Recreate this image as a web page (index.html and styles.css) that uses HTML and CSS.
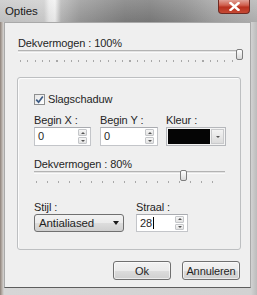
FILE: index.html
```html
<!DOCTYPE html>
<html lang="nl">
<head>
    <meta charset="UTF-8">
    <title>Opties</title>
    <link rel="stylesheet" href="styles.css">
</head>
<body>
    <div class="window">
        <div class="titlebar">
            <span class="title">Opties</span>
            <div class="close">
                <svg width="11" height="9" viewBox="0 0 11 9">
                    <path d="M1.5 1 L9.5 8 M9.5 1 L1.5 8" stroke="#fff" stroke-width="2.4" stroke-linecap="square"/>
                </svg>
            </div>
        </div>

        <div class="client">
            <div class="label top-label">Dekvermogen : 100%</div>
            <div class="slider wide">
                <div class="track"></div>
                <div class="ticks"></div>
                <div class="thumb" style="left: 218px;"></div>
            </div>

            <div class="group">
                <div class="check-row">
                    <span class="checkbox">
                        <svg width="9" height="9" viewBox="0 0 9 9">
                            <path d="M1.2 4.6 L3.6 7.2 L7.8 1.4" fill="none" stroke="#3d5b84" stroke-width="1.7"/>
                        </svg>
                    </span>
                    <span class="label">Slagschaduw</span>
                </div>

                <div class="field-row">
                    <div class="field col-x">
                        <div class="label">Begin X :</div>
                        <div class="spin-input">
                            <span class="value">0</span>
                            <span class="spin"><i class="up"></i><i class="down"></i></span>
                        </div>
                    </div>
                    <div class="field col-y">
                        <div class="label">Begin Y :</div>
                        <div class="spin-input">
                            <span class="value">0</span>
                            <span class="spin"><i class="up"></i><i class="down"></i></span>
                        </div>
                    </div>
                    <div class="field col-color">
                        <div class="label">Kleur :</div>
                        <div class="color-pick">
                            <span class="swatch"></span>
                            <span class="drop"><i class="down"></i></span>
                        </div>
                    </div>
                </div>

                <div class="label mid-label">Dekvermogen : 80%</div>
                <div class="slider narrow">
                    <div class="track"></div>
                    <div class="ticks"></div>
                    <div class="thumb" style="left: 146px;"></div>
                </div>

                <div class="field-row bottom-row">
                    <div class="field col-style">
                        <div class="label">Stijl :</div>
                        <div class="combo">
                            <span>Antialiased</span>
                            <span class="combo-arrow"></span>
                        </div>
                    </div>
                    <div class="field col-radius">
                        <div class="label">Straal :</div>
                        <div class="spin-input">
                            <span class="value">28<span class="caret"></span></span>
                            <span class="spin"><i class="up"></i><i class="down"></i></span>
                        </div>
                    </div>
                </div>
            </div>

            <div class="buttons">
                <button class="btn">Ok</button>
                <button class="btn">Annuleren</button>
            </div>
        </div>
    </div>
</body>
</html>
```

FILE: styles.css
```css
body {
    margin: 0;
    padding: 0;
    font-family: "Liberation Sans", Arial, sans-serif;
    font-size: 11px;
    letter-spacing: -0.1px;
    color: #1f1f1f;
    background: #8f8a86;
}
.window {
    width: 257px;
    height: 295px;
    overflow: hidden;
    background: linear-gradient(to right, #8c8078 0, #b9b1aa 2px, #d6d6d6 4px, #d2d2d2 251px, #bcbcbc 257px);
}
.titlebar {
    display: flex;
    align-items: flex-start;
    height: 22px;
    background:
        linear-gradient(to bottom, rgba(255,255,255,0.15), rgba(0,0,0,0.05)),
        linear-gradient(to right, #c9c9c9 0, #cfcfcf 44px, #ececec 49px, #f2f2f2 55px, #b8b8b8 61px,
            #9b9b9b 80px, #808080 125px, #7d7d7d 150px, #8e8e8e 185px, #a5a5a5 215px, #b6b6b6 257px);
}
.title {
    padding: 5px 0 0 5px;
    font-size: 11.5px;
    line-height: 13px;
    color: #1a1a1a;
}
.close {
    margin-left: auto;
    margin-right: 7px;
    width: 32px;
    height: 14px;
    box-sizing: border-box;
    border: 1px solid #6f2a22;
    border-top: none;
    border-radius: 0 0 4px 4px;
    background: linear-gradient(to bottom, #e0a096 0, #d0604f 40%, #b8311f 55%, #c64a35 100%);
    display: flex;
    align-items: center;
    justify-content: center;
}
.client {
    margin-left: 4px;
    width: 247px;
    height: 266px;
    box-sizing: border-box;
    border: 1px solid #a9a9a9;
    border-bottom-color: #5d5d5d;
    background: #efefef;
}
.label {
    line-height: 13px;
    white-space: nowrap;
}
.top-label {
    margin: 12px 0 0 13px;
    line-height: 14px;
    padding-top: 1px;
    height: 13px;
}

/* sliders */
.slider {
    position: relative;
    height: 15px;
}
.slider.wide {
    margin-left: 13px;
    width: 222px;
}
.slider.narrow {
    width: 191px;
}
.track {
    position: absolute;
    left: 0;
    right: 0;
    top: 1px;
    height: 1px;
    border-top: 1px solid #b3b3b3;
    border-bottom: 1px solid #fafafa;
    background: #e3e3e3;
}
.ticks {
    position: absolute;
    left: 2px;
    right: 2px;
    top: 11px;
    height: 2px;
    background: repeating-linear-gradient(to right, #a8a8a8 0, #a8a8a8 1px, transparent 1px, transparent 7.3px);
}
.narrow .ticks {
    background: repeating-linear-gradient(to right, #a8a8a8 0, #a8a8a8 1px, transparent 1px, transparent 11px);
}
.thumb {
    position: absolute;
    top: 0;
    width: 5px;
    height: 9px;
    border: 1px solid #7d7d7d;
    border-radius: 2px;
    background: linear-gradient(to bottom, #ffffff, #d8d8d8);
}

/* group box */
.group {
    margin: 13px 0 0 12px;
    width: 224px;
    box-sizing: border-box;
    padding: 15px 0 17px 16px;
    border: 1px solid #bdbfc1;
    border-radius: 3px;
    box-shadow: inset 1px 1px 0 #fcfcfc;
}
.check-row {
    display: flex;
    align-items: center;
    gap: 3px;
    height: 12px;
}
.checkbox {
    width: 11px;
    height: 11px;
    box-sizing: border-box;
    border: 1px solid #8e8f8f;
    background: linear-gradient(to bottom right, #e6e6e6, #ffffff);
    display: flex;
    align-items: center;
    justify-content: center;
}
.field-row {
    display: flex;
    margin-top: 9px;
}
.col-x { width: 57px; margin-right: 9px; }
.col-y { width: 58px; margin-right: 8px; }
.col-color { width: 60px; }
.col-style { width: 90px; margin-right: 12px; }
.col-radius { width: 52px; }
.spin-input {
    display: flex;
    height: 19px;
    box-sizing: border-box;
    border: 1px solid #c3c5c9;
    border-top-color: #a9abb0;
    background: #fff;
}
.value {
    flex: 1;
    padding-left: 3px;
    line-height: 17px;
    display: flex;
    align-items: center;
}
.caret {
    display: inline-block;
    width: 1px;
    height: 12px;
    margin-left: 1px;
    background: #000;
}
.spin {
    display: flex;
    flex-direction: column;
    width: 9px;
    margin: 1px 3px 1px 0;
    gap: 1px;
}
.spin i {
    flex: 1;
    display: flex;
    align-items: center;
    justify-content: center;
    border: 1px solid #c4c6c9;
    border-radius: 1px;
    background: linear-gradient(to bottom, #f6f6f6, #e2e2e2);
}
.spin i::after, .drop i::after {
    content: "";
    border-left: 2px solid transparent;
    border-right: 2px solid transparent;
}
.up::after {
    border-bottom: 2px solid #555;
}
.down::after {
    border-top: 2px solid #555;
}
.color-pick {
    display: flex;
    height: 19px;
    box-sizing: border-box;
    border: 1px solid #b5b7bb;
    background: #f4f4f4;
    padding: 1px;
    gap: 1px;
}
.swatch {
    flex: 1;
    background: #050505;
}
.drop {
    width: 13px;
    display: flex;
}
.drop i {
    flex: 1;
    display: flex;
    align-items: center;
    justify-content: center;
    border: 1px solid #c9cacc;
    background: linear-gradient(to bottom, #f3f3f3, #dcdcdc);
}
.mid-label {
    margin-top: 12px;
    line-height: 12px;
}
.bottom-row {
    margin-top: 16px;
}
.combo {
    display: flex;
    align-items: center;
    justify-content: space-between;
    height: 18px;
    box-sizing: border-box;
    padding: 0 4px 0 4px;
    font-size: 11.5px;
    border: 1px solid #707070;
    border-radius: 3px;
    background: linear-gradient(to bottom, #f2f2f2 0, #ebebeb 50%, #dddddd 51%, #cfcfcf 100%);
}
.combo-arrow {
    border-left: 3.5px solid transparent;
    border-right: 3.5px solid transparent;
    border-top: 4px solid #1a1a1a;
}
.col-radius .spin-input {
    height: 18px;
}

/* dialog buttons */
.buttons {
    display: flex;
    justify-content: flex-end;
    gap: 11px;
    margin: 11px 10px 0 0;
}
.btn {
    width: 58px;
    height: 19px;
    padding: 0;
    font-family: inherit;
    font-size: 11px;
    letter-spacing: -0.1px;
    color: #1f1f1f;
    border: 1px solid #707070;
    border-radius: 3px;
    background: linear-gradient(to bottom, #f2f2f2 0, #ebebeb 50%, #dddddd 51%, #cfcfcf 100%);
    box-shadow: inset 0 0 0 1px rgba(255,255,255,0.6);
}
```
